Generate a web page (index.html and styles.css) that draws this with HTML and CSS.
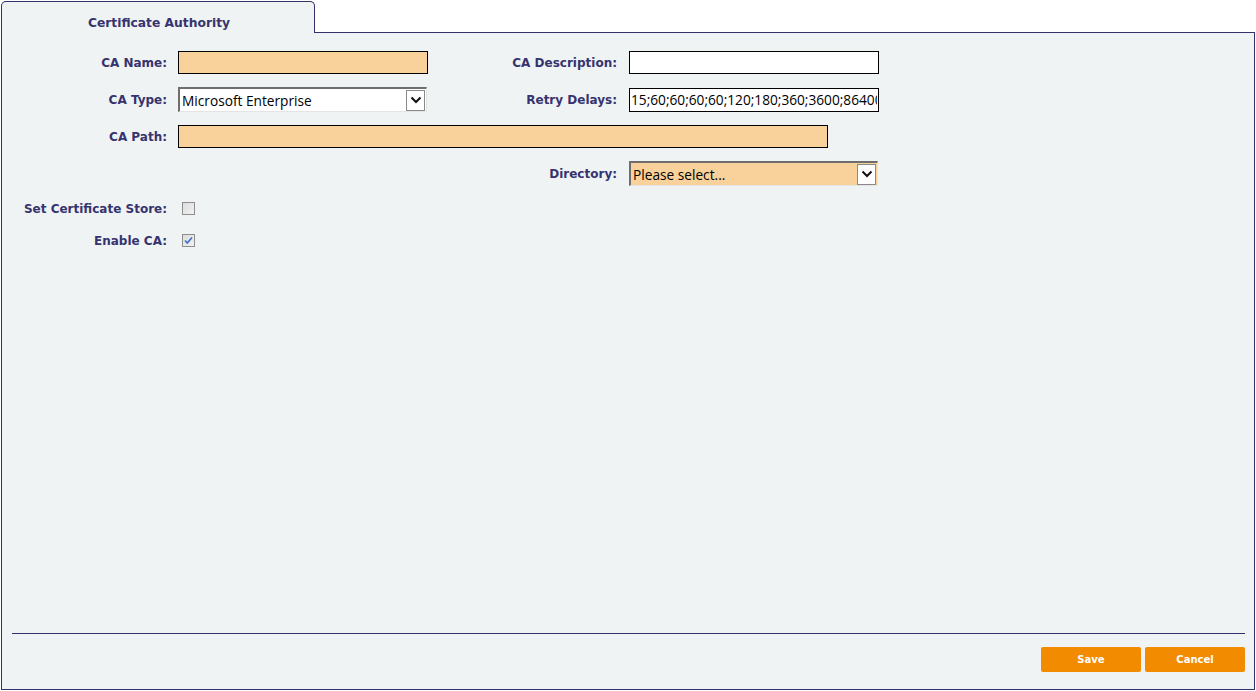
FILE: index.html
```html
<!DOCTYPE html>
<html>
<head>
<meta charset="utf-8">
<link rel="stylesheet" href="styles.css">
</head>
<body>
<div class="tabbar">
  <div class="tab">Certificate Authority</div>
  <div class="tab-fill"></div>
</div>
<div class="panel">
  <div class="form">
    <label class="lbl r1 c1">CA Name:</label>
    <input class="field peach r1 c2" type="text" value="">
    <label class="lbl r1 c3">CA Description:</label>
    <input class="field r1 c4" type="text" value="">

    <label class="lbl r2 c1">CA Type:</label>
    <div class="select r2 c2"><span class="sel-text">Microsoft Enterprise</span><span class="sel-btn"><svg width="12" height="8" viewBox="0 0 12 8"><path d="M1.5 1.5 L6 6 L10.5 1.5" fill="none" stroke="#111" stroke-width="2"/></svg></span></div>
    <label class="lbl r2 c3">Retry Delays:</label>
    <input class="field tight r2 c4" type="text" value="15;60;60;60;60;120;180;360;3600;86400">

    <label class="lbl r3 c1">CA Path:</label>
    <input class="field peach wide r3 c2" type="text" value="">

    <label class="lbl r4 c3">Directory:</label>
    <div class="select peach r4 c4"><span class="sel-text">Please select...</span><span class="sel-btn"><svg width="12" height="8" viewBox="0 0 12 8"><path d="M1.5 1.5 L6 6 L10.5 1.5" fill="none" stroke="#111" stroke-width="2"/></svg></span></div>

    <label class="lbl r5 c1">Set Certificate Store:</label>
    <span class="check r5 c2"></span>

    <label class="lbl r6 c1">Enable CA:</label>
    <span class="check r6 c2"><svg width="11" height="11" viewBox="0 0 11 11"><path d="M2 5.5 L4.3 8 L9 2.5" fill="none" stroke="#3a6fd0" stroke-width="1.6"/></svg></span>
  </div>
  <div class="footer">
    <div class="rule"></div>
    <div class="buttons">
      <button class="btn">Save</button>
      <button class="btn">Cancel</button>
    </div>
  </div>
</div>
</body>
</html>
```
FILE: styles.css
```css
html, body {
  margin: 0;
  padding: 0;
  background: #ffffff;
}
body {
  padding: 1px 1px 0 1px;
  font-family: "DejaVu Sans", Verdana, sans-serif;
}
.tabbar {
  display: flex;
  height: 32px;
}
.tab {
  box-sizing: border-box;
  width: 314px;
  height: 32px;
  border: 1px solid #34306b;
  border-bottom: none;
  border-radius: 5px 5px 0 0;
  background: #eff3f4;
  color: #36336e;
  font-weight: bold;
  font-size: 12.3px;
  text-align: center;
  padding-top: 14px;
  padding-left: 2px;
}
.tab-fill {
  flex: 1;
  box-sizing: border-box;
  height: 32px;
  border-bottom: 1px solid #34306b;
}
.panel {
  box-sizing: border-box;
  width: 1254px;
  height: 657px;
  border: 1px solid #34306b;
  border-top: none;
  background: #eff3f4;
  display: flex;
  flex-direction: column;
}
.form {
  flex: 1;
  display: grid;
  grid-template-columns: 165px 250px 179px 250px;
  grid-template-rows: 23px 25px 23px 25px 19px 19px;
  column-gap: 11px;
  row-gap: 13px;
  padding-top: 18px;
  align-content: start;
  align-items: center;
}
.lbl {
  text-align: right;
  color: #36336e;
  font-weight: bold;
  font-size: 12px;
  white-space: nowrap;
}
.r1 { grid-row: 1; }
.r2 { grid-row: 2; }
.r3 { grid-row: 3; }
.r4 { grid-row: 4; }
.r5 { grid-row: 5; }
.r6 { grid-row: 6; }
.c1 { grid-column: 1; }
.c2 { grid-column: 2; }
.c3 { grid-column: 3; }
.c4 { grid-column: 4; }
.lbl.c3 { margin-right: 1px; }
.field {
  box-sizing: border-box;
  width: 250px;
  height: 23px;
  margin: 0;
  border: 1px solid #000;
  background: #ffffff;
  font-family: "Open Sans", "Noto Sans", sans-serif;
  font-size: 13.7px;
  color: #000;
  padding: 0 1px;
  outline: none;
}
.field.tight { height: 24px; }
.field.peach { background: #f9d19a; }
.field.wide { width: 650px; grid-column: 2 / 5; }
.select {
  box-sizing: border-box;
  width: 249px;
  height: 25px;
  display: flex;
  align-items: center;
  border-top: 2px solid #6e6e6e;
  border-left: 2px solid #6e6e6e;
  border-right: 1px solid #e4e4e4;
  border-bottom: 1px solid #e4e4e4;
  background: #ffffff;
  font-family: "Open Sans", "Noto Sans", sans-serif;
  font-size: 13.7px;
  color: #000;
}
.select.peach { background: #f9d19a; }
.sel-text {
  flex: 1;
  padding-left: 2px;
  white-space: nowrap;
  overflow: hidden;
}
.sel-btn {
  box-sizing: border-box;
  width: 19px;
  height: 21px;
  margin-right: 1px;
  border: 1px solid #8a8a8a;
  background: #ffffff;
  display: flex;
  align-items: center;
  justify-content: center;
}
.check {
  box-sizing: border-box;
  width: 13px;
  height: 13px;
  margin-left: 4px;
  border: 1px solid #8e8e8e;
  background: linear-gradient(135deg, #dcdcdc, #f2f2f2);
  display: flex;
  align-items: center;
  justify-content: center;
}
.footer {
  padding: 0 9px 17px 10px;
}
.rule {
  height: 1px;
  background: #34306b;
}
.buttons {
  display: flex;
  justify-content: flex-end;
  gap: 4px;
  margin-top: 13px;
}
.btn {
  box-sizing: border-box;
  width: 100px;
  height: 25px;
  margin: 0;
  border: none;
  border-radius: 2px;
  background: #f38b00;
  color: #ffffff;
  font-family: "DejaVu Sans", Verdana, sans-serif;
  font-size: 10px;
  font-weight: bold;
  padding: 0 0 1px 0;
}
```
